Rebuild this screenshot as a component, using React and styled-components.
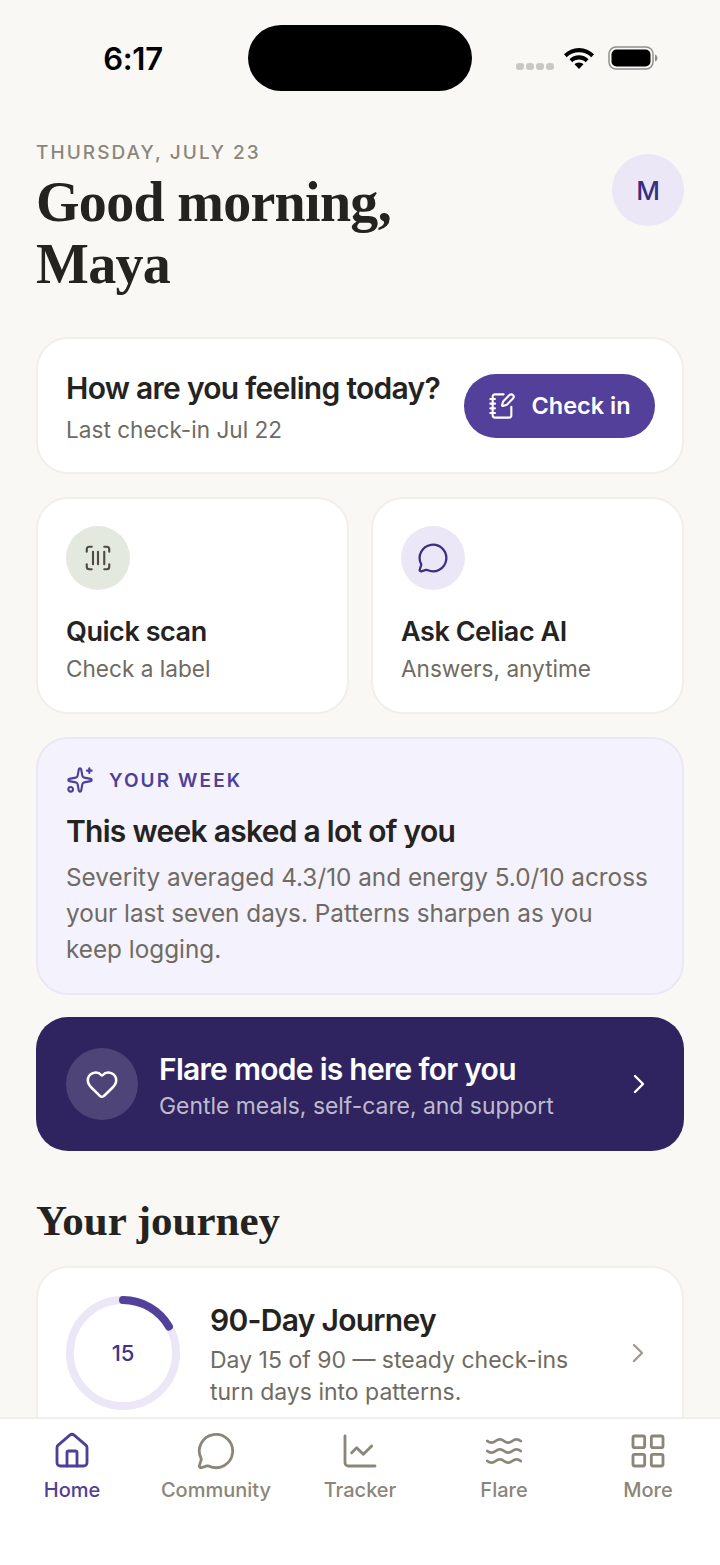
import React from 'react'
import styled, { createGlobalStyle } from 'styled-components'
import { NotebookPen, ScanBarcode, MessageCircle, Sparkles, Heart, ChevronRight, House, ChartLine, Waves, LayoutGrid } from 'lucide-react'

const Global = createGlobalStyle`
  html, body { margin: 0; padding: 0; background: #faf8f5; }
  * { box-sizing: border-box; }
`

const Screen = styled.div`
  width: 720px;
  height: 1565px;
  display: flex;
  flex-direction: column;
  overflow: hidden;
  background: #faf8f5;
  font-family: Inter, 'Liberation Sans', sans-serif;
  color: #24231f;
`

const StatusBar = styled.div`
  flex: none;
  height: 91px;
  margin-top: 25px;
  display: grid;
  grid-template-columns: 248px 224px 248px;
`

const Time = styled.div`
  font-size: 31px;
  font-weight: 600;
  color: #000;
  line-height: 66px;
  text-align: center;
  padding-left: 18px;
  padding-top: 1px;
  letter-spacing: -0.3px;
`

const Island = styled.div`
  height: 66px;
  background: #000;
  border-radius: 33px;
`

const StatusIcons = styled.div`
  display: flex;
  align-items: center;
  height: 66px;
  padding-left: 44px;
`

const Dots = styled.div`
  display: flex;
  gap: 2px;
  margin-top: 16px;
  margin-right: 9px;
`

const Dot = styled.span`
  width: 8px;
  height: 7px;
  border-radius: 3px;
  background: #c9c8c5;
`

const Main = styled.main`
  flex: 1;
  min-height: 0;
  overflow: hidden;
  padding: 0 36px;
  display: flex;
  flex-direction: column;

  & > * {
    flex: none;
  }
`

const Header = styled.header`
  display: flex;
  justify-content: space-between;
  align-items: flex-start;
  padding-top: 25px;
  margin-bottom: 42px;
`

const DateLine = styled.div`
  font-size: 19px;
  font-weight: 500;
  letter-spacing: 2.05px;
  line-height: 24px;
  color: #8b8679;
`

const Greeting = styled.h1`
  margin: 6px 0 0;
  font-family: 'Liberation Serif', serif;
  font-weight: 700;
  font-size: 56px;
  line-height: 62px;
  letter-spacing: -0.7px;
  color: #24231f;
`

const Avatar = styled.div`
  width: 72px;
  height: 72px;
  margin-top: 13px;
  border-radius: 50%;
  background: #ebe7f6;
  color: #3a2d82;
  font-size: 26px;
  font-weight: 500;
  display: flex;
  align-items: center;
  justify-content: center;
`

const Card = styled.section`
  background: #fff;
  border: 2px solid #f1efeb;
  border-radius: 32px;
`

const CheckCard = styled(Card)`
  height: 137px;
  padding: 0 27px 0 28px;
  display: flex;
  align-items: center;
  justify-content: space-between;
  margin-bottom: 23px;
`

const CheckText = styled.div`
  padding-top: 3px;
`

const CardTitle = styled.div`
  font-size: 30px;
  font-weight: 600;
  line-height: 36px;
  letter-spacing: -0.72px;
  color: #24231f;
`

const CardSub = styled.div`
  font-size: 22.6px;
  line-height: 30px;
  color: #6f6b62;
  margin-top: ${p => p.$gap}px;
`

const CheckButton = styled.button`
  width: 191px;
  height: 64px;
  border: none;
  border-radius: 32px;
  background: #52409a;
  color: #fff;
  font: 600 23.500px Inter, sans-serif;
  display: flex;
  align-items: center;
  justify-content: center;
  gap: 15px;
`

const Tiles = styled.div`
  display: grid;
  grid-template-columns: 1fr 1fr;
  gap: 22px;
  margin-bottom: 23px;
`

const Tile = styled(Card)`
  height: 217px;
  padding: 27px 28px;
`

const IconCircle = styled.div`
  width: ${p => p.$size || 64}px;
  height: ${p => p.$size || 64}px;
  flex: none;
  border-radius: 50%;
  background: ${p => p.$bg};
  color: ${p => p.$fg};
  display: flex;
  align-items: center;
  justify-content: center;
`

const TileTitle = styled(CardTitle)`
  margin-top: 24px;
  font-size: 27px;
  letter-spacing: -0.45px;
`

const WeekCard = styled.section`
  height: 258px;
  background: #f4f2fc;
  border: 2px solid #ebe8f5;
  border-radius: 32px;
  padding: 26px 34px 0 28px;
  margin-bottom: 22px;
`

const WeekLabel = styled.div`
  display: flex;
  align-items: center;
  gap: 15px;
  height: 30px;
  color: #4f3f98;
  font-size: 19px;
  font-weight: 600;
  letter-spacing: 2.1px;
`

const WeekTitle = styled(CardTitle)`
  margin-top: 18px;
`

const WeekBody = styled.p`
  margin: 10px 0 0;
  font-size: 24.3px;
  line-height: 36px;
  color: #6f6b62;
`

const FlareCard = styled.section`
  height: 134px;
  background: #2f2460;
  border-radius: 32px;
  padding: 0 29px 0 30px;
  display: flex;
  align-items: center;
  gap: 21px;
  margin-bottom: 47px;
`

const FlareText = styled.div`
  flex: 1;
  padding-top: 4px;
`

const FlareTitle = styled(CardTitle)`
  color: #fff;
`

const FlareSub = styled.div`
  font-size: 22.9px;
  line-height: 30px;
  margin-top: 4px;
  color: rgba(255, 255, 255, 0.7);
`

const SectionTitle = styled.h2`
  margin: 0 0 22px;
  font-family: 'Liberation Serif', serif;
  font-weight: 700;
  font-size: 43px;
  line-height: 46px;
`

const JourneyCard = styled(Card)`
  height: 240px;
  padding: 28px 28px;
  display: flex;
  gap: 30px;
`

const Ring = styled.div`
  position: relative;
  width: 114px;
  height: 114px;
  flex: none;
`

const RingLabel = styled.div`
  position: absolute;
  inset: 0;
  display: flex;
  align-items: center;
  justify-content: center;
  font-size: 22px;
  font-weight: 500;
  color: #3f3290;
`

const JourneyText = styled.div`
  flex: 1;
  padding-top: 6px;
`

const JourneyBody = styled.div`
  margin-top: 6px;
  font-size: 23px;
  line-height: 32px;
  color: #6f6b62;
`

const JourneyChevron = styled.div`
  color: #a09b90;
  padding-top: 41px;
`

const TabBar = styled.nav`
  flex: none;
  height: 148px;
  background: #fff;
  border-top: 2px solid #f1efeb;
  display: grid;
  grid-template-columns: repeat(5, 1fr);
`

const Tab = styled.div`
  display: flex;
  flex-direction: column;
  align-items: center;
  padding-top: 12px;
  gap: 5px;
  color: ${p => (p.$active ? '#4f3f98' : '#8b8679')};
  font-size: 20px;
  font-weight: 500;
  line-height: 28px;
`

const WifiIcon = styled.svg`
  margin-top: -3px;
`

const BatteryIcon = styled.svg`
  margin-left: 13px;
`

const tabs = [
  { label: 'Home', Icon: House, active: true },
  { label: 'Community', Icon: MessageCircle },
  { label: 'Tracker', Icon: ChartLine },
  { label: 'Flare', Icon: Waves },
  { label: 'More', Icon: LayoutGrid },
]

const Wifi = () => (
  <WifiIcon width="32" height="24" viewBox="0 0 32 24" fill="#000">
    <path d="M16 3C10 3 5 5.4 1 9.300l2.700 3C7 9 11.300 7.300 16 7.300S25 9 28.300 12.300l2.700-3C27 5.400 22 3 16 3z" />
    <path d="M16 10.300c-3.700 0-7 1.400-9.500 3.900l2.800 3c1.800-1.700 4.100-2.700 6.700-2.700s4.900 1 6.700 2.700l2.800-3c-2.500-2.500-5.800-3.900-9.500-3.900z" />
    <path d="M16 17.500c-1.800 0-3.400.7-4.500 1.800L16 24l4.500-4.700c-1.100-1.100-2.700-1.800-4.500-1.800z" />
  </WifiIcon>
)

const Battery = () => (
  <BatteryIcon width="50" height="26" viewBox="0 0 50 26">
    <rect x="1" y="2" width="44" height="22" rx="7" fill="none" stroke="#8f8e8c" strokeWidth="1.500" />
    <rect x="3.500" y="4.500" width="39" height="17" rx="5" fill="#000" />
    <path d="M47 9.500c1.500.5 2.500 2 2.500 3.500s-1 3-2.500 3.500z" fill="#8f8e8c" />
  </BatteryIcon>
)

export default function App() {
  return (
    <Screen>
      <Global />
      <StatusBar>
        <Time>6:17</Time>
        <Island />
        <StatusIcons>
          <Dots><Dot /><Dot /><Dot /><Dot /></Dots>
          <Wifi />
          <Battery />
        </StatusIcons>
      </StatusBar>

      <Main>
        <Header>
          <div>
            <DateLine>THURSDAY, JULY 23</DateLine>
            <Greeting>Good morning,<br />Maya</Greeting>
          </div>
          <Avatar>M</Avatar>
        </Header>

        <CheckCard>
          <CheckText>
            <CardTitle>How are you feeling today?</CardTitle>
            <CardSub $gap={9}>Last check-in Jul 22</CardSub>
          </CheckText>
          <CheckButton><NotebookPen size={28} strokeWidth={1.8} />Check in</CheckButton>
        </CheckCard>

        <Tiles>
          <Tile>
            <IconCircle $bg="#e4e9df" $fg="#4e4a42"><ScanBarcode size={30} strokeWidth={1.7} /></IconCircle>
            <TileTitle>Quick scan</TileTitle>
            <CardSub $gap={4}>Check a label</CardSub>
          </Tile>
          <Tile>
            <IconCircle $bg="#ebe7f6" $fg="#3a2d82"><MessageCircle size={32} strokeWidth={1.7} /></IconCircle>
            <TileTitle>Ask Celiac AI</TileTitle>
            <CardSub $gap={4}>Answers, anytime</CardSub>
          </Tile>
        </Tiles>

        <WeekCard>
          <WeekLabel><Sparkles size={28} strokeWidth={1.8} />YOUR WEEK</WeekLabel>
          <WeekTitle>This week asked a lot of you</WeekTitle>
          <WeekBody>Severity averaged 4.3/10 and energy 5.0/10 across your last seven days. Patterns sharpen as you keep logging.</WeekBody>
        </WeekCard>

        <FlareCard>
          <IconCircle $size={72} $bg="rgba(255,255,255,0.15)" $fg="#fff"><Heart size={34} strokeWidth={1.8} /></IconCircle>
          <FlareText>
            <FlareTitle>Flare mode is here for you</FlareTitle>
            <FlareSub>Gentle meals, self-care, and support</FlareSub>
          </FlareText>
          <ChevronRight size={32} color="#fff" strokeWidth={1.8} />
        </FlareCard>

        <SectionTitle>Your journey</SectionTitle>

        <JourneyCard>
          <Ring>
            <svg width="114" height="114" viewBox="0 0 114 114">
              <circle cx="57" cy="57" r="53" fill="none" stroke="#ebe7f6" strokeWidth="8" />
              <path d="M57 4A53 53 0 0 1 102.900 30.500" fill="none" stroke="#52409a" strokeWidth="8" strokeLinecap="round" />
            </svg>
            <RingLabel>15</RingLabel>
          </Ring>
          <JourneyText>
            <CardTitle>90-Day Journey</CardTitle>
            <JourneyBody>Day 15 of 90 — steady check-ins turn days into patterns.</JourneyBody>
          </JourneyText>
          <JourneyChevron><ChevronRight size={32} strokeWidth={1.8} /></JourneyChevron>
        </JourneyCard>
      </Main>

      <TabBar>
        {tabs.map(({ label, Icon, active }) => (
          <Tab key={label} $active={active}>
            <Icon size={40} strokeWidth={1.7} />
            {label}
          </Tab>
        ))}
      </TabBar>
    </Screen>
  )
}
